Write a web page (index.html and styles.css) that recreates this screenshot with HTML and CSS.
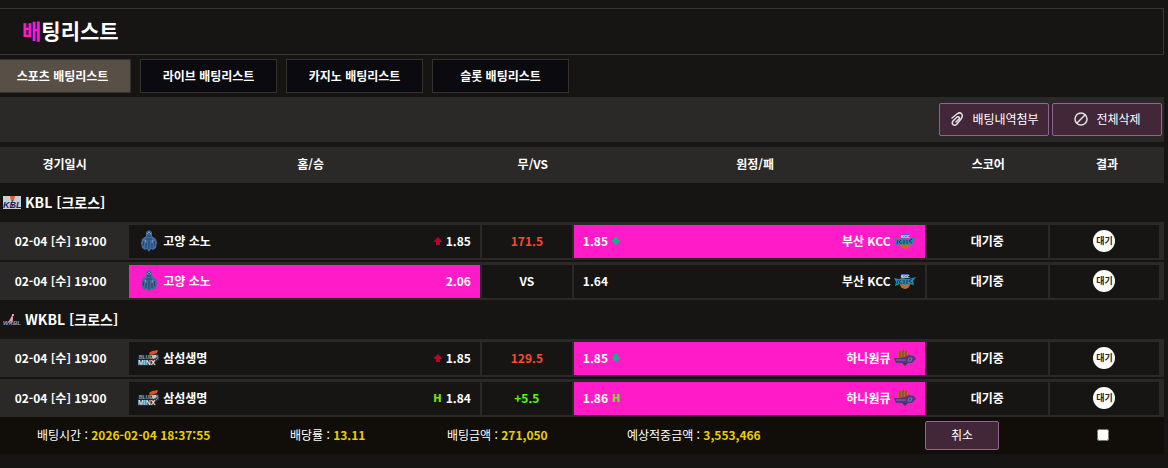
FILE: index.html
```html
<!DOCTYPE html>
<html lang="ko">
<head>
  <meta charset="UTF-8">
  <title>배팅리스트</title>
  <link rel="stylesheet" href="styles.css">
</head>
<body>
  <!-- Shared logos and arrows -->
  <svg class="sprite" aria-hidden="true">
    <symbol id="kbl" viewBox="0 0 18 13">
      <rect width="18" height="13" fill="#c9cdd6"/>
      <path d="M7 0h5l-1 4-3 1z" fill="#e8641e"/>
      <text x="0" y="12" class="logo-text" font-size="9" fill="#17265c">KBL</text>
      <path d="M10 4l-2 4 2 1-2 3" stroke="#17265c" fill="none"/>
    </symbol>
    <symbol id="wkbl" viewBox="0 0 18 13">
      <text x="0" y="12" class="logo-text" font-size="6" fill="#86a0cf">WKBL</text>
      <path d="M10 1l-3 5-2 4 3-2 1 3 1-5z" fill="#e79bb0"/>
      <circle cx="10" cy="2" r="1" fill="#f3c7d0"/>
    </symbol>
    <symbol id="sono" viewBox="0 0 16 22">
      <path d="M8 0l3 2v4l4 3 1 4-1 5-3 2-2-1-2 3-2-3-2 1-3-2-1-5 1-4 4-3V2z" fill="#3f6c9c"/>
      <path d="M6 3h4M6 6h4M5 9h6M8 10v9M3 11l-1 5M13 11l1 5M5 12v6M11 12v6" stroke="#243f61" fill="none"/>
      <path d="M6 4l2-2 2 2M4 10l1 3M12 10l-1 3" stroke="#6d9ac6" fill="none"/>
    </symbol>
    <symbol id="samsung" viewBox="0 0 22 18">
      <rect x="0" y="6" width="18" height="11" fill="#1d2733"/>
      <path d="M12 6l4-3 5 3v5l-5 2-3-3z" fill="#263a55"/>
      <path d="M11 4l3-2 6-1-1 3-3 1-4 1z" fill="#d9531f"/>
      <path d="M14 6h4l1 2-3 2-2-1z" fill="#e5b79a"/>
      <path d="M19 6l1 3-2 2" stroke="#5d8fc4" fill="none"/>
      <text x="1" y="10" class="logo-text upright" font-size="5" fill="#8fa3b8">BLUE</text>
      <text x="0" y="16" class="logo-text upright" font-size="7" fill="#e4ebf2">MINX</text>
    </symbol>
    <symbol id="kcc" viewBox="0 0 22 15">
      <circle cx="11" cy="10" r="5" fill="#c9652f"/>
      <path d="M7 0h8l-1 4H8z" fill="#4668b8"/>
      <text x="7" y="4" class="logo-text upright" font-size="4" fill="#fff">KCC</text>
      <path d="M0 4l5 1 3-1 6 1 8-2-3 4 1 4-5-1-4 1-5-1-5 2 1-4z" fill="#2389ae"/>
      <path d="M4 6l-1 4M7 6l-2 2 3 2M10 6v4M13 6v4M18 5l-3 2 3 2" stroke="#123a4c" fill="none"/>
    </symbol>
    <symbol id="hana" viewBox="0 0 22 18">
      <circle cx="9" cy="7" r="6" fill="#b9602f"/>
      <path d="M9 1v8M6 2v7M12 2v7" stroke="#7c4027" fill="none"/>
      <path d="M0 9l5 0 6-1 4-2 5 1 2 3-4 4H2z" fill="#553582"/>
      <path d="M2 11h10M15 9l3 0-1 3-3 0z" stroke="#8a6cab" fill="none"/>
      <path d="M8 14h6l-3 3z" fill="#274a42"/>
    </symbol>
    <symbol id="up" viewBox="0 0 8 8"><path d="M4 0l4 4v1H6v3H2V5H0V4z"/></symbol>
    <symbol id="down" viewBox="0 0 8 8"><path d="M4 8l4-4V3H6V0H2v3H0v1z"/></symbol>
  </svg>

  <div class="container">
    <h1><span>배</span>팅리스트</h1>

    <nav class="tabs">
      <a href="#" class="active">스포츠 배팅리스트</a>
      <a href="#">라이브 배팅리스트</a>
      <a href="#">카지노 배팅리스트</a>
      <a href="#">슬롯 배팅리스트</a>
    </nav>

    <div class="toolbar">
      <button type="button" class="btn">
        <svg width="16" height="16" viewBox="0 0 16 16"><path d="M3 7l5-4c4-3 7 1 4 5l-4 5c-3 3-6 0-4-3l4-4c2-1 3 1 2 2l-3 3"/></svg>
        배팅내역첨부
      </button>
      <button type="button" class="btn">
        <svg width="16" height="16" viewBox="0 0 16 16"><circle cx="8" cy="8" r="6"/><path d="M4 12l8-8"/></svg>
        전체삭제
      </button>
    </div>

    <table class="bets">
      <colgroup>
        <col class="col-date"><col class="col-team"><col class="col-vs"><col class="col-team"><col class="col-score"><col class="col-result">
      </colgroup>
      <thead>
        <tr>
          <th>경기일시</th>
          <th class="shift">홈/승</th>
          <th class="shift">무/VS</th>
          <th class="shift">원정/패</th>
          <th>스코어</th>
          <th>결과</th>
        </tr>
      </thead>
      <tbody>
        <tr class="league">
          <td colspan="6"><div><svg width="18" height="13"><use href="#kbl"/></svg>KBL [크로스]</div></td>
        </tr>
        <tr class="match">
          <td class="date">02-04 [수] 19:00</td>
          <td><div class="box team"><svg width="22" height="22"><use href="#sono"/></svg>고양 소노<span class="odds"><svg class="up" width="8" height="8"><use href="#up"/></svg>1.85</span></div></td>
          <td><div class="box over">171.5</div></td>
          <td><div class="box team away picked"><svg width="22" height="15"><use href="#kcc"/></svg>부산 KCC<span class="odds"><svg class="down" width="8" height="8"><use href="#down"/></svg>1.85</span></div></td>
          <td><div class="box">대기중</div></td>
          <td class="last"><div class="box"><span class="badge">대기</span></div></td>
        </tr>
        <tr class="match">
          <td class="date">02-04 [수] 19:00</td>
          <td><div class="box team picked"><svg width="22" height="22"><use href="#sono"/></svg>고양 소노<span class="odds">2.06</span></div></td>
          <td><div class="box">VS</div></td>
          <td><div class="box team away"><svg width="22" height="15"><use href="#kcc"/></svg>부산 KCC<span class="odds">1.64</span></div></td>
          <td><div class="box">대기중</div></td>
          <td class="last"><div class="box"><span class="badge">대기</span></div></td>
        </tr>
        <tr class="league">
          <td colspan="6"><div><svg width="18" height="13"><use href="#wkbl"/></svg>WKBL [크로스]</div></td>
        </tr>
        <tr class="match">
          <td class="date">02-04 [수] 19:00</td>
          <td><div class="box team"><svg width="22" height="18"><use href="#samsung"/></svg>삼성생명<span class="odds"><svg class="up" width="8" height="8"><use href="#up"/></svg>1.85</span></div></td>
          <td><div class="box over">129.5</div></td>
          <td><div class="box team away picked"><svg width="22" height="18"><use href="#hana"/></svg>하나원큐<span class="odds"><svg class="down" width="8" height="8"><use href="#down"/></svg>1.85</span></div></td>
          <td><div class="box">대기중</div></td>
          <td class="last"><div class="box"><span class="badge">대기</span></div></td>
        </tr>
        <tr class="match">
          <td class="date">02-04 [수] 19:00</td>
          <td><div class="box team"><svg width="22" height="18"><use href="#samsung"/></svg>삼성생명<span class="odds"><b class="handi">H</b>1.84</span></div></td>
          <td><div class="box plus">+5.5</div></td>
          <td><div class="box team away picked"><svg width="22" height="18"><use href="#hana"/></svg>하나원큐<span class="odds"><b class="handi">H</b>1.86</span></div></td>
          <td><div class="box">대기중</div></td>
          <td class="last"><div class="box"><span class="badge">대기</span></div></td>
        </tr>
      </tbody>
    </table>

    <!-- Bet slip totals -->
    <div class="summary">
      <span>배팅시간 : <b>2026-02-04 18:37:55</b></span>
      <span>배당률 : <b>13.11</b></span>
      <span>배팅금액 : <b>271,050</b></span>
      <span>예상적중금액 : <b>3,553,466</b></span>
      <button type="button" class="btn cancel">취소</button>
      <input type="checkbox" aria-label="선택">
    </div>
  </div>
</body>
</html>
```
FILE: styles.css
```css
* { box-sizing: border-box; }
body { margin: 0; padding: 8px 4px 14px 0; background: #161513; color: #fff; font: 12px/18px "Noto Sans CJK KR", sans-serif; overflow-x: hidden; }
.sprite { display: none; }
svg { flex: none; }
.logo-text { font-family: "Liberation Sans", sans-serif; font-weight: bold; font-style: italic; }
.logo-text.upright { font-style: normal; }

h1 { margin: 0 0 4px; padding: 6px 22px 8px; border: 1px solid #383735; border-left: 0; font-size: 21px; line-height: 31px; }
h1 span { color: #ff1cc8; }

.tabs { display: flex; gap: 9px; margin: 0 0 4px -6px; }
.tabs a { width: 137px; padding: 7px 0; border: 1px solid #33322f; background: #0b0a0f; color: #fff; font-weight: bold; text-align: center; text-decoration: none; }
.tabs a.active { background: #585047; }

.toolbar { display: flex; justify-content: flex-end; gap: 3px; padding: 6px 2px; margin-bottom: 5px; background: #2a2927; }
.btn { display: flex; align-items: center; justify-content: center; gap: 7px; width: 110px; height: 33px; padding: 0 0 1px; border: 1px solid #91648f; border-radius: 2px; background: #422738; color: #fff; font: inherit; cursor: pointer; }
.btn svg { fill: none; stroke: #e6dfe4; stroke-width: 1.5; stroke-linecap: round; }

.bets { width: 100%; border-collapse: separate; border-spacing: 0; table-layout: fixed; }
.col-date { width: 11.1%; }
.col-team { width: 30.3%; }
.col-vs { width: 7.9%; }
.col-score { width: 10.6%; }
.bets th { height: 36px; padding: 0 0 2px; background: #2a2927; }
.bets th.shift { padding-left: 10px; }
.bets td { padding: 0; }
.league td { height: 39px; padding: 0 0 1px 3px; font-size: 14px; font-weight: bold; }
.league div { display: flex; align-items: center; gap: 4px; }
.match td { padding: 3px 2px 2px 0; background: #2a2927; font-weight: bold; }
.match + .match td { border-top: 2px solid #161513; }
.match .date { padding: 0 8px 0 0; text-align: center; }
.match .last { padding-right: 5px; }
.box { display: flex; align-items: center; justify-content: center; height: 33px; padding-bottom: 1px; background: #161513; }
.box.team { justify-content: flex-start; gap: 3px; padding: 0 9px 1px; }
.box.away { flex-direction: row-reverse; }
.box.picked { background: #ff1cc8; }
.box.over { color: #ff4630; }
.box.plus { color: #55ff08; }
.odds { display: flex; align-items: center; gap: 4px; margin-left: auto; }
.away .odds { flex-direction: row-reverse; margin: 0 auto 0 0; }
.up { fill: #b4062c; }
.down { fill: #08b887; }
.handi { color: #7be30d; font: bold 10px "DejaVu Sans", sans-serif; }
.badge { width: 22px; height: 22px; border-radius: 50%; background: #fff; color: #222; font-size: 9px; line-height: 22px; text-align: center; }

.summary { display: grid; grid-template-columns: 253fr 157fr 180fr 298fr 117fr 122fr; align-items: center; height: 37px; padding: 0 0 1px 37px; background: #110e0a; }
.summary b { color: #e9cd04; }
.btn.cancel { width: 74px; height: 29px; }
.summary input { width: 12px; height: 12px; margin: 0; justify-self: center; }
```
